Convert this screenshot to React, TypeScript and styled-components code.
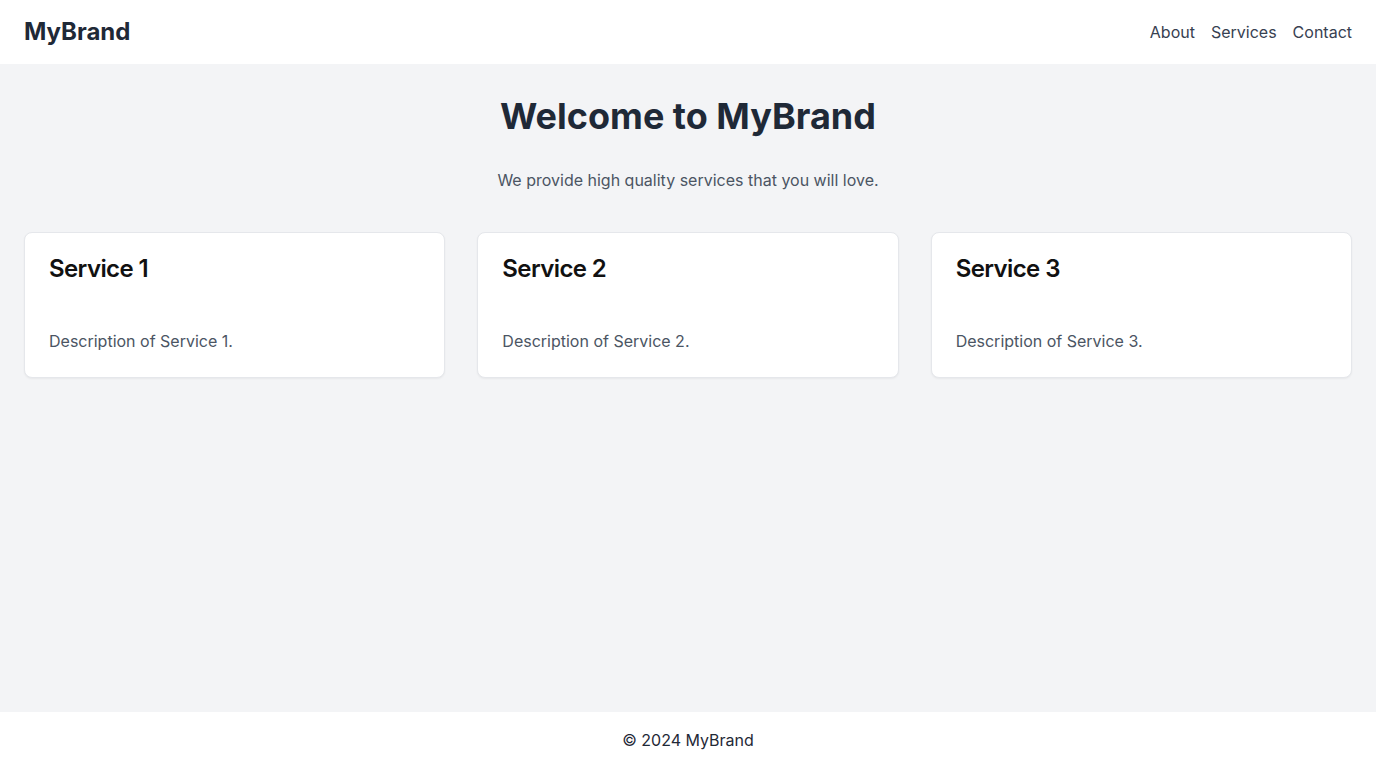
import React from "react";
import styled, { createGlobalStyle } from "styled-components";

const GlobalStyle = createGlobalStyle`
  * { box-sizing: border-box; }
  html, body { margin: 0; padding: 0; }
  body {
    font-family: Inter, "Noto Sans", "Liberation Sans", sans-serif;
    background: #f3f4f6;
    color: #1f2937;
  }
  #root { min-height: 100vh; }
`;

const Page = styled.div`
  display: flex;
  flex-direction: column;
  min-height: 100vh;
`;

const Header = styled.header`
  display: flex;
  align-items: center;
  justify-content: space-between;
  height: 64px;
  padding: 0 24px;
  background: #ffffff;
`;

const Brand = styled.div`
  font-size: 24px;
  line-height: 32px;
  font-weight: 700;
  color: #1f2937;
`;

const Nav = styled.nav`
  display: flex;
  gap: 16px;
`;

const NavLink = styled.a`
  font-size: 16px;
  line-height: 24px;
  color: #374151;
  text-decoration: none;
`;

const Main = styled.main`
  flex: 1;
  display: flex;
  flex-direction: column;
  align-items: stretch;
  padding: 32px 24px 24px;
`;

const Title = styled.h1`
  margin: 0;
  text-align: center;
  font-size: 36px;
  line-height: 40px;
  font-weight: 700;
  color: #1f2937;
`;

const Subtitle = styled.p`
  margin: 32px 0 0;
  text-align: center;
  font-size: 16px;
  line-height: 24px;
  color: #4b5563;
`;

const Grid = styled.div`
  display: grid;
  grid-template-columns: repeat(3, 1fr);
  gap: 32px;
  margin-top: 40px;
`;

const Card = styled.div`
  background: #ffffff;
  border: 1px solid #e5e7eb;
  border-radius: 8px;
  box-shadow: 0 1px 2px rgba(0, 0, 0, 0.05);
  padding: 25px 24px 24px;
`;

const CardTitle = styled.h2`
  margin: 0 0 49px;
  font-size: 24px;
  line-height: 22px;
  font-weight: 600;
  letter-spacing: -0.6px;
  color: #111111;
`;

const CardText = styled.p`
  margin: 0;
  font-size: 16px;
  line-height: 24px;
  color: #4b5563;
`;

const Footer = styled.footer`
  background: #ffffff;
  padding: 16px 24px;
  text-align: center;
  font-size: 16px;
  line-height: 24px;
  color: #1f2937;
`;

const services = [1, 2, 3];

export default function App() {
  return (
    <>
      <GlobalStyle />
      <Page>
        <Header>
          <Brand>MyBrand</Brand>
          <Nav>
            <NavLink href="#">About</NavLink>
            <NavLink href="#">Services</NavLink>
            <NavLink href="#">Contact</NavLink>
          </Nav>
        </Header>
        <Main>
          <Title>Welcome to MyBrand</Title>
          <Subtitle>We provide high quality services that you will love.</Subtitle>
          <Grid>
            {services.map((n) => (
              <Card key={n}>
                <CardTitle>Service {n}</CardTitle>
                <CardText>Description of Service {n}.</CardText>
              </Card>
            ))}
          </Grid>
        </Main>
        <Footer>© 2024 MyBrand</Footer>
      </Page>
    </>
  );
}
